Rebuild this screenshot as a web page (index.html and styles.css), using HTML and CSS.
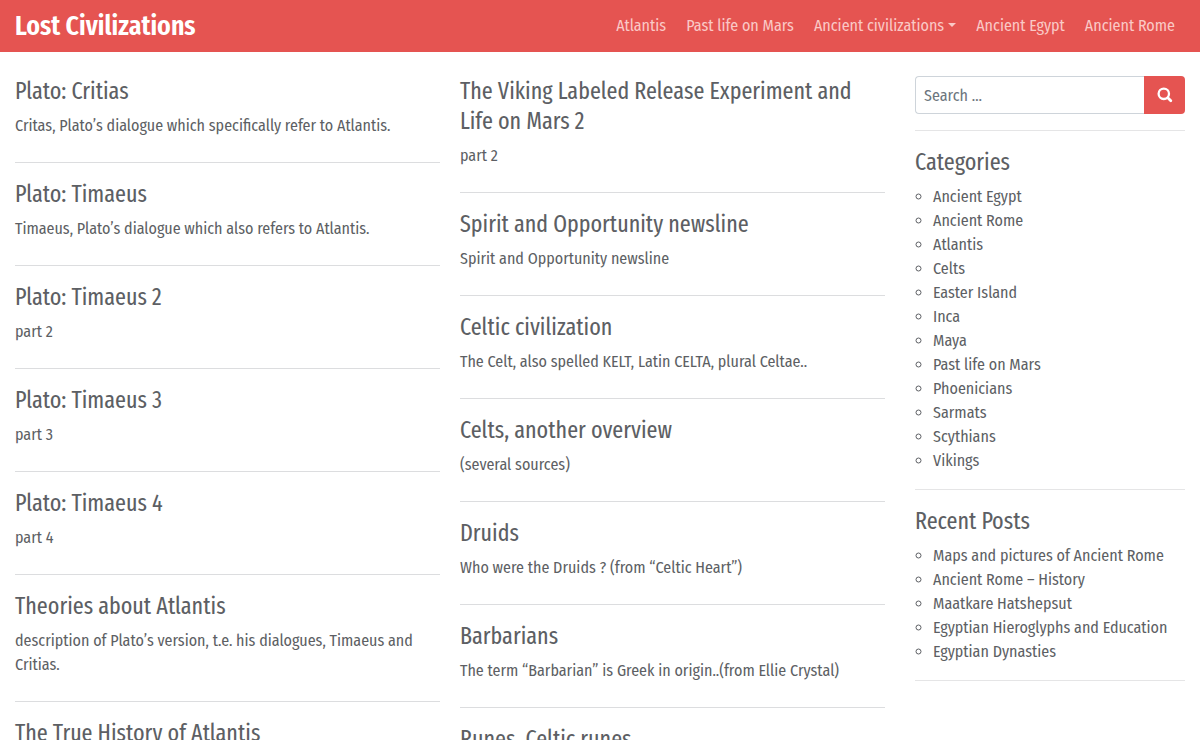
FILE: index.html
```html
<!DOCTYPE html>
<html lang="en">
<head>
<meta charset="utf-8">
<title>Lost Civilizations</title>
<meta name="viewport" content="width=device-width, initial-scale=1">
<link rel="stylesheet" href="styles.css">
</head>
<body>
<header class="navbar">
  <a class="brand" href="#">Lost Civilizations</a>
  <nav class="nav">
    <a href="#">Atlantis</a>
    <a href="#">Past life on Mars</a>
    <a class="dropdown" href="#">Ancient civilizations</a>
    <a href="#">Ancient Egypt</a>
    <a href="#">Ancient Rome</a>
  </nav>
</header>
<div class="layout">
  <main class="posts">
    <div class="column">
      <article class="post"><h2><a href="#">Plato: Critias</a></h2><p>Critas, Plato’s dialogue which specifically refer to Atlantis.</p></article>
      <article class="post"><h2><a href="#">Plato: Timaeus</a></h2><p>Timaeus, Plato’s dialogue which also refers to Atlantis.</p></article>
      <article class="post"><h2><a href="#">Plato: Timaeus 2</a></h2><p>part 2</p></article>
      <article class="post"><h2><a href="#">Plato: Timaeus 3</a></h2><p>part 3</p></article>
      <article class="post"><h2><a href="#">Plato: Timaeus 4</a></h2><p>part 4</p></article>
      <article class="post"><h2><a href="#">Theories about Atlantis</a></h2><p>description of Plato’s version, t.e. his dialogues, Timaeus and Critias.</p></article>
      <article class="post"><h2><a href="#">The True History of Atlantis</a></h2></article>
    </div>
    <div class="column">
      <article class="post"><h2><a href="#">The Viking Labeled Release Experiment and Life on Mars 2</a></h2><p>part 2</p></article>
      <article class="post"><h2><a href="#">Spirit and Opportunity newsline</a></h2><p>Spirit and Opportunity newsline</p></article>
      <article class="post"><h2><a href="#">Celtic civilization</a></h2><p>The Celt, also spelled KELT, Latin CELTA, plural Celtae..</p></article>
      <article class="post"><h2><a href="#">Celts, another overview</a></h2><p>(several sources)</p></article>
      <article class="post"><h2><a href="#">Druids</a></h2><p>Who were the Druids ? (from “Celtic Heart”)</p></article>
      <article class="post"><h2><a href="#">Barbarians</a></h2><p>The term “Barbarian” is Greek in origin..(from Ellie Crystal)</p></article>
      <article class="post"><h2><a href="#">Runes, Celtic runes</a></h2></article>
    </div>
  </main>
  <aside class="sidebar">
    <form class="search widget">
      <input type="search" placeholder="Search …" aria-label="Search">
      <button type="submit" aria-label="Search">
        <svg width="16" height="16" viewBox="0 0 16 16" fill="none" stroke="currentColor" aria-hidden="true"><circle cx="6.8" cy="6.8" r="5.2" stroke-width="2.3"/><path d="M10.8 10.8l3 3" stroke-width="2.8" stroke-linecap="round"/></svg>
      </button>
    </form>
    <section class="widget">
      <h2>Categories</h2>
      <ul>
        <li><a href="#">Ancient Egypt</a></li>
        <li><a href="#">Ancient Rome</a></li>
        <li><a href="#">Atlantis</a></li>
        <li><a href="#">Celts</a></li>
        <li><a href="#">Easter Island</a></li>
        <li><a href="#">Inca</a></li>
        <li><a href="#">Maya</a></li>
        <li><a href="#">Past life on Mars</a></li>
        <li><a href="#">Phoenicians</a></li>
        <li><a href="#">Sarmats</a></li>
        <li><a href="#">Scythians</a></li>
        <li><a href="#">Vikings</a></li>
      </ul>
    </section>
    <section class="widget">
      <h2>Recent Posts</h2>
      <ul>
        <li><a href="#">Maps and pictures of Ancient Rome</a></li>
        <li><a href="#">Ancient Rome – History</a></li>
        <li><a href="#">Maatkare Hatshepsut</a></li>
        <li><a href="#">Egyptian Hieroglyphs and Education</a></li>
        <li><a href="#">Egyptian Dynasties</a></li>
      </ul>
    </section>
  </aside>
</div>
</body>
</html>
```

FILE: styles.css
```css
* { box-sizing: border-box; }
html { scrollbar-width: none; }
body {
  margin: 0;
  background: #fff;
  color: #5d5f64;
  font: 16px/24px "Fira Sans Condensed", "Liberation Sans Narrow", Lato, sans-serif;
}
a { color: inherit; text-decoration: none; }
h2, p, ul { margin: 0; }
h2, .brand { font-family: "Fira Sans Extra Condensed", "Fira Sans Condensed", "Liberation Sans Narrow", sans-serif; }
h2 { margin-bottom: 8px; font-size: 24px; line-height: 30px; font-weight: 400; }

.navbar {
  display: flex;
  align-items: center;
  justify-content: space-between;
  min-height: 52px;
  padding: 0 15px;
  background: #e55451;
}
.brand { color: #fff; font-size: 28px; line-height: 40px; font-weight: 600; }
.nav { display: flex; }
.nav a { padding: 8px 10px; color: #fac9c6; white-space: nowrap; }
.dropdown::after {
  content: "";
  display: inline-block;
  margin-left: 4px;
  vertical-align: 4px;
  border: 4px solid transparent;
  border-top-color: currentColor;
  border-bottom: 0;
}

.layout { display: grid; grid-template-columns: 3fr 1fr; padding-top: 24px; }
.posts { display: grid; grid-template-columns: 1fr 1fr; gap: 20px; padding: 0 15px; }
.post { margin-bottom: 16px; padding-bottom: 24px; border-bottom: 1px solid #dcdddf; }

.sidebar { padding: 0 15px; }
.widget { margin-bottom: 16px; padding-bottom: 16px; border-bottom: 1px solid #e5e5e6; }
.widget ul { padding-left: 18px; list-style: circle; }
.search { display: flex; }
.search input {
  flex: 1;
  min-width: 0;
  height: 38px;
  padding: 0 8px;
  border: 1px solid #ced4da;
  border-right: 0;
  border-radius: 4px 0 0 4px;
  background: #fff;
  color: #5d5f64;
  font: inherit;
}
.search input::placeholder { color: #6c757d; opacity: 1; }
.search button {
  display: flex;
  align-items: center;
  justify-content: center;
  width: 41px;
  padding: 0;
  border: 0;
  border-radius: 0 4px 4px 0;
  background: #e55451;
  color: #fff;
}
```
